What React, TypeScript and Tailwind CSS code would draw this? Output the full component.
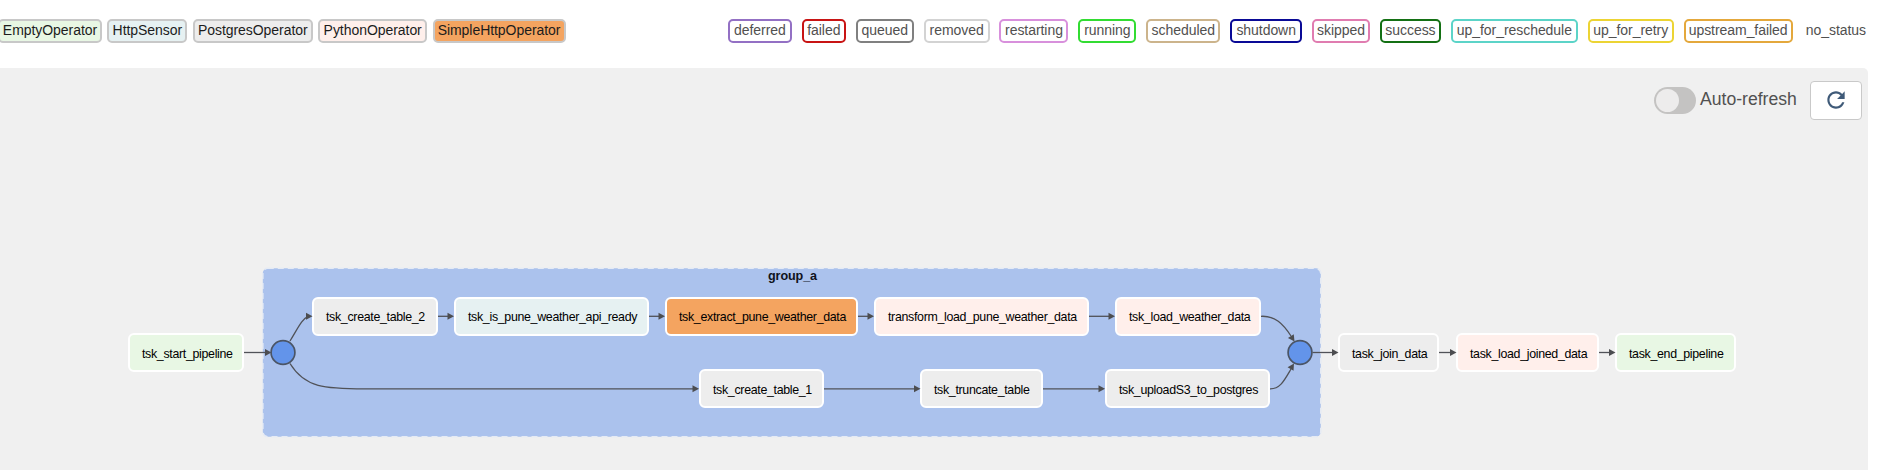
const operators = [
  { name: "EmptyOperator", cls: "w-[104px] bg-[#e8f7e4]" },
  { name: "HttpSensor", cls: "w-[80px] bg-[#e6f1f2]" },
  { name: "PostgresOperator", cls: "w-[120px] bg-[#ededed]" },
  { name: "PythonOperator", cls: "w-[109px] bg-[#ffefeb]" },
  { name: "SimpleHttpOperator", cls: "w-[133px] bg-[#f4a460]" },
];

const states = [
  { name: "deferred", cls: "w-[64px] border-[#9370c4]" },
  { name: "failed", cls: "w-[44px] border-[#c81414]" },
  { name: "queued", cls: "w-[58px] border-[#808080]" },
  { name: "removed", cls: "w-[66px] border-[#d3d3d3]" },
  { name: "restarting", cls: "w-[69px] border-[#d890dc]" },
  { name: "running", cls: "w-[58px] border-[#32dc32]" },
  { name: "scheduled", cls: "w-[74px] border-[#ccb48c]" },
  { name: "shutdown", cls: "w-[72px] border-[#0a0a96]" },
  { name: "skipped", cls: "w-[58px] border-[#e07cb0]" },
  { name: "success", cls: "w-[61px] border-[#147014]" },
  { name: "up_for_reschedule", cls: "w-[127px] border-[#5cd4c8]" },
  { name: "up_for_retry", cls: "w-[86px] border-[#ecd434]" },
  { name: "upstream_failed", cls: "w-[109px] border-[#e4a83c]" },
];

const tasks = [
  { name: "tsk_start_pipeline", cls: "left-[128px] top-[265px] w-[116px] pt-[3px] bg-[#e8f7e4]" },
  { name: "tsk_create_table_2", cls: "left-[312px] top-[229px] w-[126px] pt-px bg-[#ededed]" },
  { name: "tsk_is_pune_weather_api_ready", cls: "left-[454px] top-[229px] w-[195px] pt-px bg-[#e6f1f2]" },
  { name: "tsk_extract_pune_weather_data", cls: "left-[665px] top-[229px] w-[193px] pt-px bg-[#f4a460]" },
  { name: "transform_load_pune_weather_data", cls: "left-[874px] top-[229px] w-[215px] pt-px bg-[#ffefeb]" },
  { name: "tsk_load_weather_data", cls: "left-[1115px] top-[229px] w-[146px] pt-px bg-[#ffefeb]" },
  { name: "tsk_create_table_1", cls: "left-[699px] top-[301px] w-[125px] pt-[3px] bg-[#ededed]" },
  { name: "tsk_truncate_table", cls: "left-[920px] top-[301px] w-[123px] pt-[3px] bg-[#ededed]" },
  { name: "tsk_uploadS3_to_postgres", cls: "left-[1105px] top-[301px] w-[165px] pt-[3px] bg-[#ededed]" },
  { name: "task_join_data", cls: "left-[1338px] top-[265px] w-[101px] pt-[3px] bg-[#ededed]" },
  { name: "task_load_joined_data", cls: "left-[1456px] top-[265px] w-[143px] pt-[3px] bg-[#ffefeb]" },
  { name: "task_end_pipeline", cls: "left-[1615px] top-[265px] w-[121px] pt-[3px] bg-[#e8f7e4]" },
];

const edges = [
  "M244 284.5H266",
  "M290 273C298 260 302 251 308 248.3",
  "M438 248.3H449",
  "M649 248.3H660",
  "M858 248.3H869",
  "M1089 248.3H1110",
  "M290 295.5C305 320 325 320.8 365 320.8H694",
  "M824 320.8H915",
  "M1043 320.8H1100",
  "M1261 248.3C1275 247.5 1283 256 1291 268",
  "M1270 320.8C1280 321 1284 313 1291 301",
  "M1312.5 284.5H1333",
  "M1439 284.5H1451",
  "M1599 284.5H1610",
];

const arrowHeads = [
  "translate(271.5 284.5)",
  "translate(312.5 248.3)",
  "translate(454 248.3)",
  "translate(665 248.3)",
  "translate(874 248.3)",
  "translate(1115 248.3)",
  "translate(699 320.8)",
  "translate(920.5 320.8)",
  "translate(1105 320.8)",
  "translate(1294.5 273.5) rotate(56)",
  "translate(1294 295.5) rotate(-58)",
  "translate(1338.5 284.5)",
  "translate(1456.5 284.5)",
  "translate(1615.5 284.5)",
];

function Legend() {
  return (
    <header className="flex h-[68px] items-start justify-between pt-[19px] pr-[14px] text-[14px] leading-[18px] tracking-[-0.05px]">
      <ul className="-ml-[2px] flex gap-[5.4px] text-[#1c1c1c]">
        {operators.map((o) => (
          <li key={o.name} className={`flex h-6 justify-center rounded-[5px] border-2 border-[#c8c8c8] ${o.cls}`}>
            {o.name}
          </li>
        ))}
      </ul>
      <ul className="flex gap-[9.9px] text-[#51504f]">
        {states.map((s) => (
          <li key={s.name} className={`flex h-6 justify-center rounded-[5px] border-2 ${s.cls}`}>
            {s.name}
          </li>
        ))}
        <li className="w-[63.5px] pt-[2px] text-right">no_status</li>
      </ul>
    </header>
  );
}

function Controls() {
  return (
    <div className="flex justify-end pt-[13px] pr-[6px]">
      <div className="mt-[6px] flex h-[27px] w-[42px] items-center rounded-full bg-[#c4c3c2] pl-[2px]">
        <span className="h-[23px] w-[23px] rounded-full bg-[#edecec]" />
      </div>
      <span className="mt-[5px] ml-[4px] w-[110px] text-[17.6px] leading-[26px] text-[#515151]">Auto-refresh</span>
      <button className="flex h-[39px] w-[52px] items-center justify-center rounded-[4px] border border-[#c9c9c9] bg-white" aria-label="Refresh">
        <svg className="-mt-[2px]" width="26" height="26" viewBox="0 0 24 24" fill="#3f5a78">
          <path d="M17.65 6.35C16.2 4.9 14.21 4 12 4c-4.42 0-7.99 3.58-7.99 8s3.57 8 7.99 8c3.73 0 6.84-2.55 7.73-6h-2.08c-.82 2.33-3.04 4-5.65 4-3.31 0-6-2.69-6-6s2.69-6 6-6c1.66 0 3.14.69 4.22 1.78L13 11h7V4l-2.35 2.35z" />
        </svg>
      </button>
    </div>
  );
}

function Graph() {
  return (
    <div className="absolute inset-0">
      <svg className="absolute inset-0" width="1868" height="402" viewBox="0 0 1868 402" fill="none">
        <rect x="262.8" y="200.3" width="1058" height="168.4" rx="5" fill="#abc2ed" stroke="#e6ebf4" strokeWidth="1.6" strokeDasharray="6 4" />
      </svg>
      <div className="absolute top-[200px] left-[263px] w-[1059px] text-center text-[12.6px] leading-[16px] font-bold tracking-[-0.1px] text-[#10131c]">
        group_a
      </div>
      {tasks.map((t) => (
        <div
          key={t.name}
          className={`absolute flex h-[39px] items-center rounded-[6px] border-2 border-white pl-[12px] text-[12.4px] leading-[16px] tracking-[-0.32px] whitespace-nowrap text-black ${t.cls}`}
        >
          {t.name}
        </div>
      ))}
      <svg className="absolute inset-0" width="1868" height="402" viewBox="0 0 1868 402" fill="none">
        {edges.map((d) => (
          <path key={d} d={d} stroke="#505258" strokeWidth="1.3" />
        ))}
        {arrowHeads.map((t) => (
          <path key={t} d="M0 0L-6.5 -3.5V3.5Z" transform={t} fill="#4c4d50" />
        ))}
        <circle cx="283" cy="284.5" r="11.9" fill="#6394ea" stroke="#4b5566" strokeWidth="1.7" />
        <circle cx="1300" cy="284.5" r="11.9" fill="#6394ea" stroke="#4b5566" strokeWidth="1.7" />
      </svg>
    </div>
  );
}

export default function App() {
  return (
    <main className="flex h-[470px] w-[1880px] flex-col overflow-hidden bg-white font-['Liberation_Sans',Arial,sans-serif]">
      <Legend />
      <section className="relative mr-[12px] flex-1 rounded-tr-[5px] bg-[#f0f0f0]">
        <Graph />
        <div className="relative">
          <Controls />
        </div>
      </section>
    </main>
  );
}
